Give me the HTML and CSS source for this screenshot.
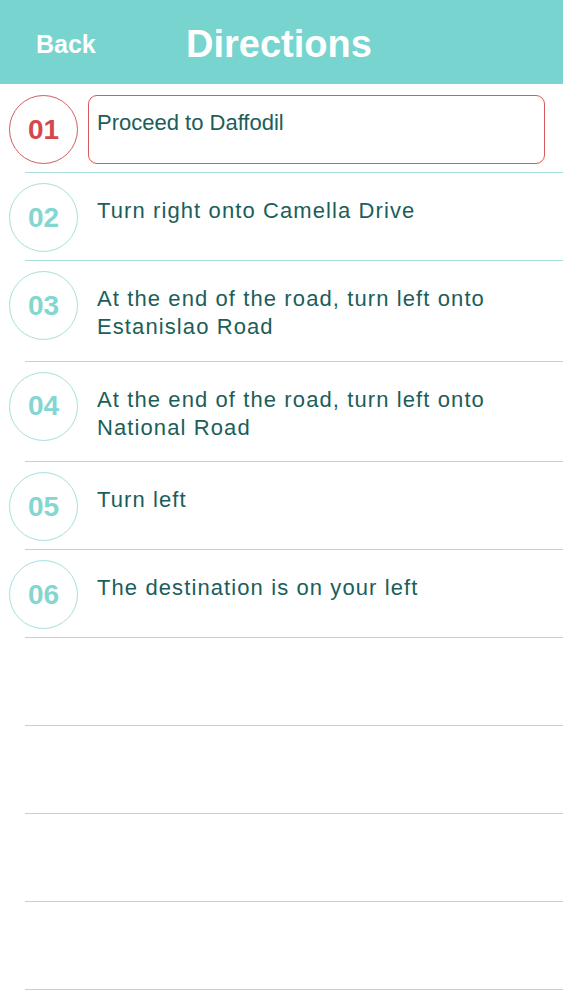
FILE: index.html
```html
<!DOCTYPE html>
<html lang="en">
<head>
    <meta charset="UTF-8">
    <meta name="viewport" content="width=device-width, initial-scale=1.0">
    <title>Directions</title>
    <link rel="stylesheet" href="styles.css">
</head>
<body>

    <header class="topbar">
        <a class="back" href="#">Back</a>
        <h1>Directions</h1>
    </header>

    <ul class="steps">
        <li class="step active">
            <div class="num">01</div>
            <div class="text">Proceed to Daffodil</div>
        </li>
        <li class="step">
            <div class="num">02</div>
            <div class="text">Turn right onto Camella Drive</div>
        </li>
        <li class="step">
            <div class="num">03</div>
            <div class="text">At the end of the road, turn left onto Estanislao Road</div>
        </li>
        <li class="step">
            <div class="num">04</div>
            <div class="text">At the end of the road, turn left onto National Road</div>
        </li>
        <li class="step">
            <div class="num">05</div>
            <div class="text">Turn left</div>
        </li>
        <li class="step">
            <div class="num">06</div>
            <div class="text">The destination is on your left</div>
        </li>
        <li class="step empty"></li>
        <li class="step empty"></li>
        <li class="step empty"></li>
        <li class="step empty"></li>
    </ul>

</body>
</html>
```

FILE: styles.css
```css
* {
    margin: 0;
    padding: 0;
    box-sizing: border-box;
    font-family: "Liberation Sans", Arial, sans-serif;
}

body {
    background-color: white;
    width: 563px;
}

.topbar {
    height: 84px;
    background-color: #77d4cf;
    display: flex;
    align-items: center;
    padding-left: 36px;
    padding-top: 4px;
}

.back {
    color: white;
    font-size: 25px;
    font-weight: bold;
    text-decoration: none;
    width: 150px;
}

.topbar h1 {
    color: white;
    font-size: 38px;
    font-weight: bold;
}

.steps {
    list-style: none;
    padding-top: 1px;
}

.step {
    display: flex;
    align-items: flex-start;
    margin-left: 25px;
    padding: 10px 18px 8px 0;
    border-bottom: 1px solid #a9dfdb;
}

.step.empty {
    height: 88px;
}

.num {
    flex: none;
    width: 69px;
    height: 69px;
    margin-left: -16px;
    border: 1.5px solid #a3e0dc;
    border-radius: 50%;
    display: flex;
    align-items: center;
    justify-content: center;
    color: #84d6d1;
    font-size: 28px;
    font-weight: bold;
}

.text {
    flex: 1;
    min-height: 69px;
    margin-left: 10px;
    padding: 13px 8px 10.5px;
    border: 1.5px solid transparent;
    border-radius: 9px;
    color: #1b5e5a;
    font-size: 22px;
    line-height: 28px;
    letter-spacing: 1.1px;
}

.step.active .num {
    border-color: #d65a5e;
    color: #d4474c;
}

.step.active .text {
    border-color: #d65a5e;
    letter-spacing: 0;
}
```
